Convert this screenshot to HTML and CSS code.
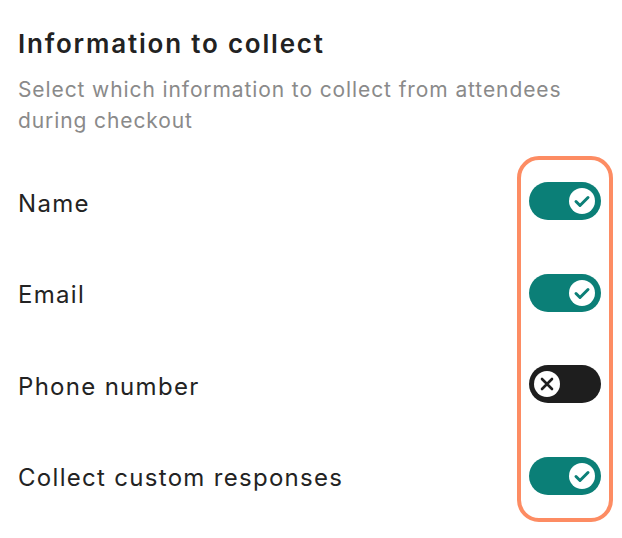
FILE: index.html
```html
<!DOCTYPE html>
<html lang="en">
<head>
<meta charset="utf-8">
<title>Information to collect</title>
<link rel="stylesheet" href="styles.css">
</head>
<body>
<main class="page">
  <h1 class="title">Information to collect</h1>
  <p class="subtitle">Select which information to collect from attendees during checkout</p>
  <div class="fields">
    <div class="labels">
      <div class="label">Name</div>
      <div class="label">Email</div>
      <div class="label">Phone number</div>
      <div class="label">Collect custom responses</div>
    </div>
    <div class="toggles">
      <div class="toggle on"><span class="knob"><svg viewBox="0 0 26 26" width="26" height="26"><path d="M7 13.5 L11 17.5 L19 9.5" fill="none" stroke="#0b7f77" stroke-width="3" stroke-linecap="round" stroke-linejoin="round"/></svg></span></div>
      <div class="toggle on"><span class="knob"><svg viewBox="0 0 26 26" width="26" height="26"><path d="M7 13.5 L11 17.5 L19 9.5" fill="none" stroke="#0b7f77" stroke-width="3" stroke-linecap="round" stroke-linejoin="round"/></svg></span></div>
      <div class="toggle off"><span class="knob"><svg viewBox="0 0 26 26" width="26" height="26"><path d="M8 8 L18 18 M18 8 L8 18" fill="none" stroke="#1e1e1e" stroke-width="2.6" stroke-linecap="round"/></svg></span></div>
      <div class="toggle on"><span class="knob"><svg viewBox="0 0 26 26" width="26" height="26"><path d="M7 13.5 L11 17.5 L19 9.5" fill="none" stroke="#0b7f77" stroke-width="3" stroke-linecap="round" stroke-linejoin="round"/></svg></span></div>
    </div>
  </div>
</main>
</body>
</html>
```
FILE: styles.css
```css
html, body {
  margin: 0;
  padding: 0;
  background: #ffffff;
}
.page {
  font-family: Inter, "Noto Sans", "Liberation Sans", sans-serif;
  padding: 28px 9px 0 18px;
  color: #232323;
}
.title {
  margin: 0;
  font-size: 26px;
  font-weight: 600;
  line-height: 32px;
  letter-spacing: 1.8px;
  color: #222222;
}
.subtitle {
  margin: 14px 0 0 0;
  font-size: 21px;
  font-weight: 400;
  line-height: 31px;
  letter-spacing: 0.9px;
  color: #8a8a8a;
  max-width: 560px;
}
.fields {
  display: flex;
  justify-content: space-between;
  margin-top: 20px;
}
.labels {
  display: flex;
  flex-direction: column;
  padding-top: 28px;
  gap: 53.5px;
}
.label {
  height: 38px;
  display: flex;
  align-items: center;
  font-size: 24px;
  font-weight: 400;
  letter-spacing: 1.3px;
  color: #232323;
}
.toggles {
  display: flex;
  flex-direction: column;
  gap: 53.5px;
  padding: 22px 8px 23px 8px;
  border: 4px solid #fd8c63;
  border-radius: 22px;
}
.toggle {
  width: 72px;
  height: 38px;
  border-radius: 19px;
  display: flex;
  align-items: center;
  box-sizing: border-box;
  padding: 0 6px;
}
.toggle.on {
  background: #0b7f77;
  justify-content: flex-end;
}
.toggle.off {
  background: #1e1e1e;
  justify-content: flex-start;
  padding-left: 5px;
}
.knob {
  width: 26px;
  height: 26px;
  border-radius: 50%;
  background: #ffffff;
  display: flex;
}
.knob svg {
  display: block;
}
```
